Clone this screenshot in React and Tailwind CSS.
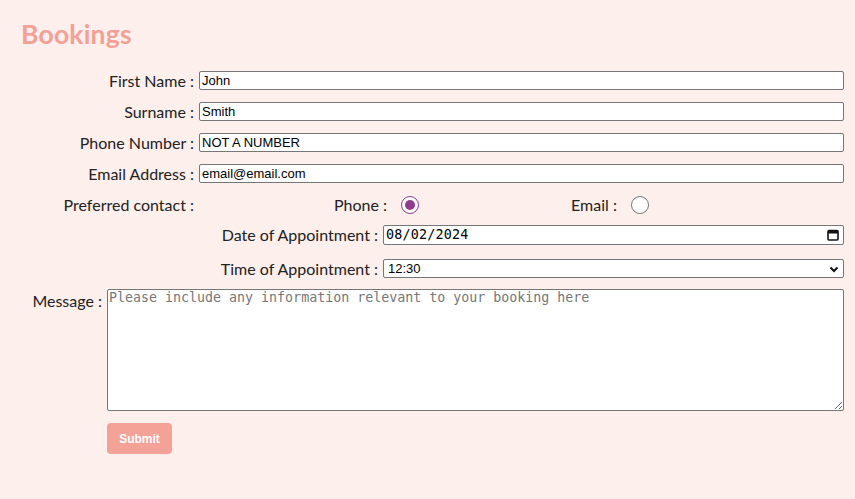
export default function App() {
  const label = "text-[16px] text-[#222] text-right leading-none";
  const field =
    "h-[19px] bg-white border border-[#767676] rounded-[2px] px-[2px] text-[13px] leading-[17px] text-black font-['Liberation_Sans',Arial,sans-serif] flex items-center";
  return (
    <div className="min-h-screen w-full bg-[#fdefec] font-['Lato','Noto_Sans',sans-serif] text-[#222]">
      <div className="pl-[21px] pr-[11px] pt-[19px]">
        <h1 className="text-[26.5px] font-bold text-[#f3a196] tracking-[0.2px] leading-[31px]">Bookings</h1>
        <div className="mt-[21px] flex flex-col">
          <div className="grid grid-cols-[173px_1fr] gap-x-[5px] gap-y-[12px] items-center">
            <span className={label}>First Name :</span>
            <div className={field}>John</div>
            <span className={label}>Surname :</span>
            <div className={field}>Smith</div>
            <span className={label}>Phone Number :</span>
            <div className={field}>NOT A NUMBER</div>
            <span className={label}>Email Address :</span>
            <div className={field}>email@email.com</div>
            <span className={label}>Preferred contact :</span>
            <div className="h-[19px] flex items-center">
              <span className="ml-[135px] text-[16px] leading-none">Phone :</span>
              <span className="ml-[14px] w-[18px] h-[18px] rounded-full border-[1.5px] border-[#8e3c8c] bg-white flex items-center justify-center">
                <span className="w-[10px] h-[10px] rounded-full bg-[#8e3c8c]" />
              </span>
              <span className="ml-[152px] text-[16px] leading-none">Email :</span>
              <span className="ml-[14px] w-[18px] h-[18px] rounded-full border border-[#767676] bg-white" />
            </div>
          </div>
          <div className="mt-[11px] grid grid-cols-[357px_1fr] gap-x-[5px] gap-y-[14px] items-center">
            <span className={label}>Date of Appointment :</span>
            <div className="h-[20px] bg-white border border-[#767676] rounded-[2px] pl-[2px] pr-[4px] flex items-center justify-between">
              <span className="text-[13.4px] font-['DejaVu_Sans_Mono',monospace] tracking-[0.2px] text-black">08/02/2024</span>
              <svg width="12" height="12" viewBox="0 0 12 12">
                <rect x="1" y="1.5" width="10" height="9.5" rx="1" fill="none" stroke="#111" strokeWidth="1.6" />
                <rect x="1" y="1.5" width="10" height="3" fill="#111" />
              </svg>
            </div>
            <span className={label}>Time of Appointment :</span>
            <div className="h-[19px] bg-white border border-[#767676] rounded-[2px] pl-[4px] pr-[4px] flex items-center justify-between">
              <span className="text-[13px] font-['Liberation_Sans',Arial,sans-serif] text-black">12:30</span>
              <svg width="10" height="8" viewBox="0 0 10 8">
                <path d="M1.5 2.5 L5 6 L8.5 2.5" fill="none" stroke="#111" strokeWidth="2" />
              </svg>
            </div>
          </div>
          <div className="mt-[11px] grid grid-cols-[81px_1fr] gap-x-[5px] items-start">
            <span className={label + " pt-[4px]"}>Message :</span>
            <textarea
              className="h-[122px] bg-white border border-[#767676] rounded-[2px] px-[1px] py-0 text-[13.3px] leading-[16px] font-['DejaVu_Sans_Mono',monospace] placeholder:text-[#777] resize"
              placeholder="Please include any information relevant to your booking here"
            />
            <span />
            <div className="pt-[12px]">
              <button className="w-[65px] h-[31px] rounded-[4px] bg-[#f4a197] text-white text-[12px] font-bold font-['Liberation_Sans',Arial,sans-serif]">
                Submit
              </button>
            </div>
          </div>
        </div>
      </div>
    </div>
  );
}
